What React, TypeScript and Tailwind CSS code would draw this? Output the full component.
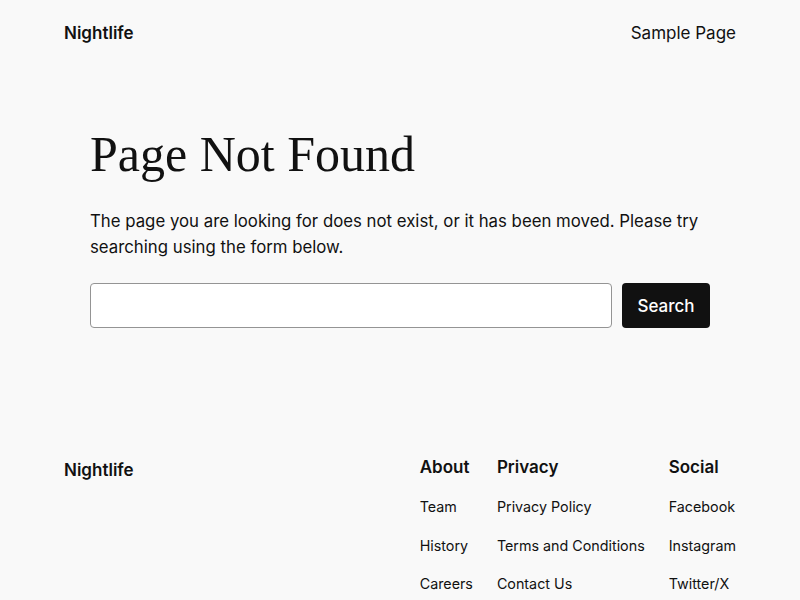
export default function App() {
  const sans = { fontFamily: 'Inter, "Noto Sans", sans-serif' };
  return (
    <div className="min-h-[600px] w-[800px] bg-[#f9f9f9] text-[#111111] overflow-hidden" style={sans}>
      <header className="flex items-center justify-between px-16 pt-[20px] h-[46px]">
        <div className="text-[17px] font-semibold leading-[26px]">Nightlife</div>
        <div className="text-[17px] leading-[26px]">Sample Page</div>
      </header>
      <main className="px-[90px] pt-[78px]">
        <h1
          className="text-[50px] leading-[60px]"
          style={{ fontFamily: '"Liberation Serif", serif' }}
        >
          Page Not Found
        </h1>
        <p className="mt-[24px] text-[16.8px] leading-[26px] w-[620px]">
          The page you are looking for does not exist, or it has been moved. Please try searching using the form below.
        </p>
        <form className="mt-[23px] flex gap-[10px] w-[620px]" onSubmit={(e) => e.preventDefault()}>
          <input
            type="text"
            className="flex-1 h-[45px] bg-white border border-[#949494] rounded-[4px] px-3 outline-none"
          />
          <button
            type="submit"
            className="h-[45px] w-[88px] bg-[#111111] text-white rounded-[4px] text-[17px] font-medium pt-[2px]"
          >
            Search
          </button>
        </form>
      </main>
      <footer className="flex justify-between px-16 mt-[126px]">
        <div className="text-[17px] font-semibold leading-[26px] pt-[3px]">Nightlife</div>
        <div className="flex gap-6">
          <FooterCol title="About" items={["Team", "History", "Careers"]} />
          <FooterCol title="Privacy" items={["Privacy Policy", "Terms and Conditions", "Contact Us"]} />
          <FooterCol title="Social" items={["Facebook", "Instagram", "Twitter/X"]} />
        </div>
      </footer>
    </div>
  );
}

function FooterCol({ title, items }: { title: string; items: string[] }) {
  return (
    <div className="flex flex-col">
      <div className="text-[17px] font-semibold leading-[26px]">{title}</div>
      <div className="flex flex-col gap-[16.5px] mt-[16px]">
        {items.map((i) => (
          <div key={i} className="text-[14.3px] leading-[22px]">
            {i}
          </div>
        ))}
      </div>
    </div>
  );
}
